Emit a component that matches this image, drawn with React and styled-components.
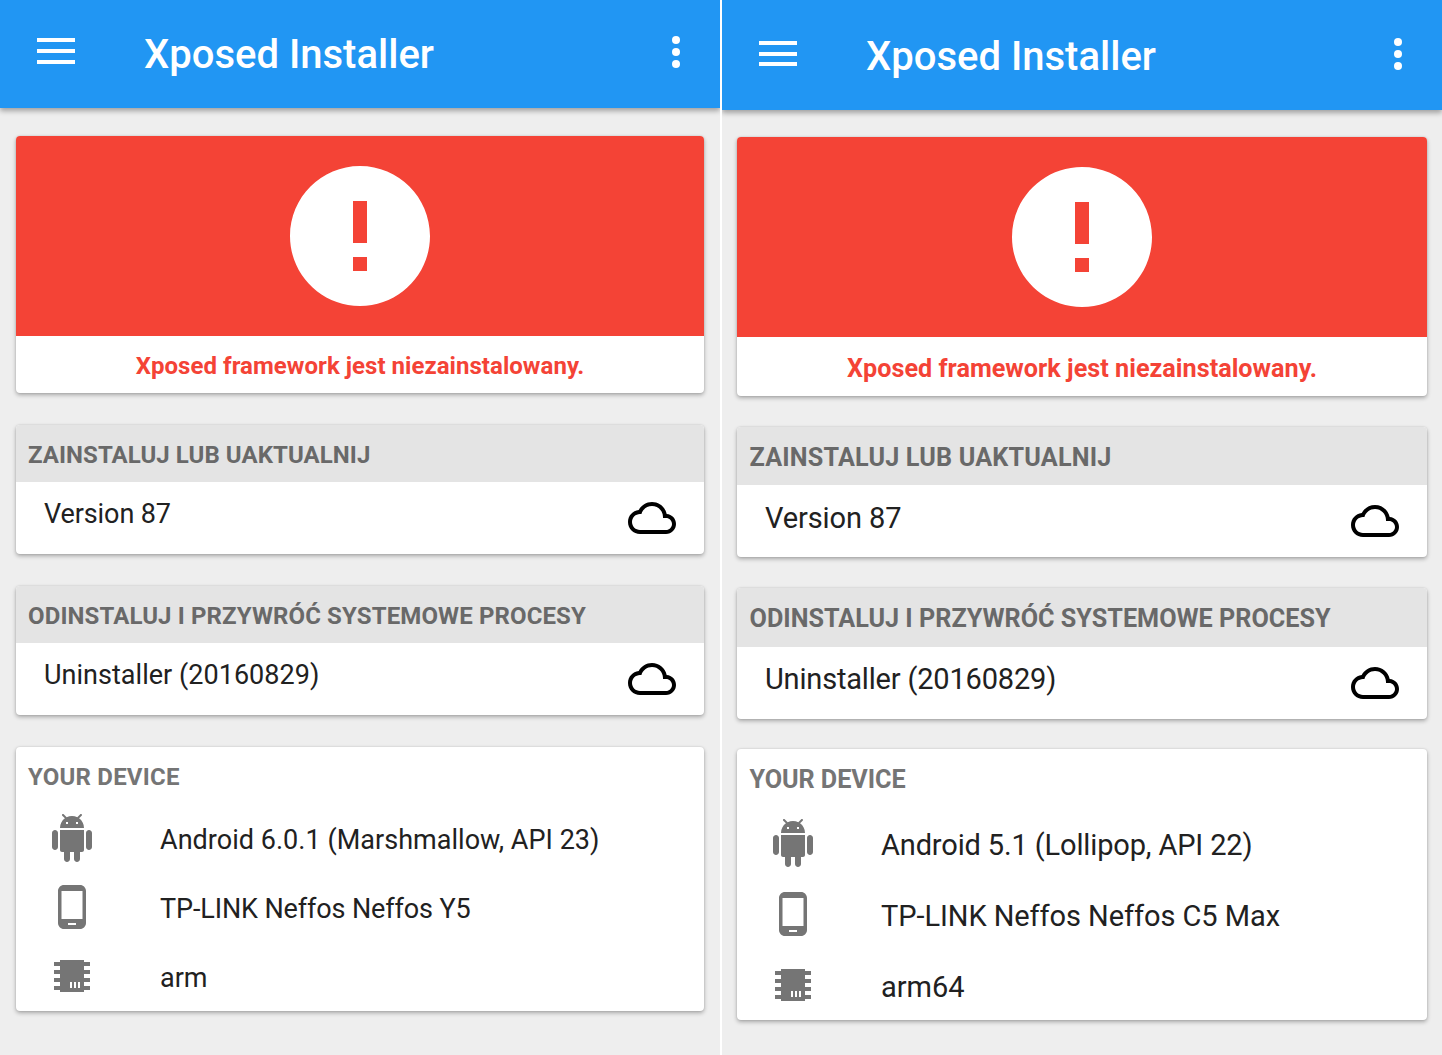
import React from 'react';
import styled, { createGlobalStyle, ThemeProvider } from 'styled-components';

const GlobalStyle = createGlobalStyle`
  * { box-sizing: border-box; }
  body { margin: 0; background: #fff; font-family: Roboto, "Noto Sans", sans-serif; }
`;

const small = {
  bar: 108, menuTop: 38, menuHeight: 26, titleTop: 1, dotsTop: 36,
  top: 28, side: 16, status: 57, statusLine: 60, gap: 32, header: 57, headerLine: 60, headerIndent: 12,
  row: 72, rowShift: -9, statusSize: 24, statusTrack: 0.04, headSize: 24, itemSize: 27,
  deviceTop: 10, deviceStep: 69, deviceHeight: 207,
};
const large = {
  bar: 110, menuTop: 41, menuHeight: 25, titleTop: 3, dotsTop: 38,
  top: 27, side: 15, status: 59, statusLine: 63, gap: 30.5, header: 58.7, headerLine: 62.5, headerIndent: 12.5,
  row: 72.2, rowShift: -7, statusSize: 25.2, statusTrack: 0.02, headSize: 25.2, itemSize: 29,
  deviceTop: 11.2, deviceStep: 70.7, deviceHeight: 212,
};

const Page = styled.div`
  display: flex;
  gap: 2px;
  width: 1442px;
  height: 1055px;
  overflow: hidden;
`;
const Screen = styled.section`
  width: 720px;
  background: #eee;
  overflow: hidden;
`;
const Toolbar = styled.header`
  display: flex;
  align-items: flex-start;
  height: ${p => p.theme.bar}px;
  padding: 0 40px 0 37px;
  background: #2196f3;
  box-shadow: 0 3px 5px rgba(0, 0, 0, 0.32);
`;
const MenuButton = styled.div`
  display: flex;
  flex-direction: column;
  justify-content: space-between;
  width: 38px;
  height: ${p => p.theme.menuHeight}px;
  margin-top: ${p => p.theme.menuTop}px;
`;
const MenuBar = styled.i`
  height: 4px;
  background: #fff;
`;
const Title = styled.h1`
  flex: 1;
  margin: ${p => p.theme.titleTop}px 0 0 69px;
  color: #fff;
  font-size: 40px;
  font-weight: 500;
  line-height: 108px;
`;
const Overflow = styled.div`
  display: flex;
  flex-direction: column;
  gap: 4px;
  margin-top: ${p => p.theme.dotsTop}px;
`;
const Dot = styled.i`
  width: 8px;
  height: 8px;
  border-radius: 50%;
  background: #fff;
`;
const Cards = styled.main`
  display: flex;
  flex-direction: column;
  gap: ${p => p.theme.gap}px;
  padding: ${p => p.theme.top}px ${p => p.theme.side}px 0;
`;
const Card = styled.article`
  background: #fff;
  border-radius: 4px;
  overflow: hidden;
  box-shadow: 0 2px 4px rgba(0, 0, 0, 0.3), 0 0 2px rgba(0, 0, 0, 0.12);
`;
const ErrorBanner = styled.div`
  display: flex;
  align-items: center;
  justify-content: center;
  height: 200px;
  background: #f44336;
`;
const StatusText = styled.p`
  height: ${p => p.theme.status}px;
  margin: 0;
  color: #f44336;
  font-size: ${p => p.theme.statusSize}px;
  font-weight: 700;
  letter-spacing: ${p => p.theme.statusTrack}px;
  line-height: ${p => p.theme.statusLine}px;
  text-align: center;
`;
const CardHeader = styled.h2`
  height: ${p => p.theme.header}px;
  margin: 0;
  padding-left: ${p => p.theme.headerIndent}px;
  background: ${p => (p.$plain ? 'transparent' : '#e4e4e4')};
  color: ${p => (p.$plain ? '#757575' : '#696969')};
  font-size: ${p => p.theme.headSize}px;
  font-weight: 700;
  letter-spacing: ${p => p.$track || 0}px;
  line-height: ${p => p.theme.headerLine}px;
  white-space: nowrap;
`;
const PackageRow = styled.div`
  display: flex;
  align-items: center;
  justify-content: space-between;
  height: ${p => p.theme.row}px;
  padding: 0 28px;
`;
const ItemText = styled.span`
  color: #212121;
  font-size: ${p => p.theme.itemSize}px;
  letter-spacing: ${p => p.$track || 0}px;
  white-space: nowrap;
`;
const PackageName = styled(ItemText)`
  margin-top: ${p => p.theme.rowShift}px;
`;
const DeviceList = styled.div`
  height: ${p => p.theme.deviceHeight}px;
  padding: ${p => p.theme.deviceTop}px 0 0 32px;
`;
const DeviceRow = styled.div`
  display: flex;
  height: ${p => p.theme.deviceStep}px;
`;
const DeviceName = styled(ItemText)`
  margin: 2px 0 0 64px;
  line-height: 48px;
`;

const Icon = ({ size = 48, color = '#757575', d }) => (
  <svg width={size} height={size} viewBox="0 0 24 24" fill={color}>
    <path d={d} fillRule="evenodd" />
  </svg>
);

const paths = {
  error: 'M12 2C6.48 2 2 6.48 2 12s4.48 10 10 10 10-4.48 10-10S17.52 2 12 2zm1 15h-2v-2h2v2zm0-4h-2V7h2v6z',
  cloud: 'M19.35 10.04C18.67 6.59 15.64 4 12 4 9.11 4 6.6 5.64 5.35 8.04 2.34 8.36 0 10.91 0 14c0 3.31 2.69 6 6 6h13c2.76 0 5-2.24 5-5 0-2.64-2.05-4.78-4.65-4.96zM19 18H6c-2.21 0-4-1.79-4-4s1.79-4 4-4h.71C7.37 7.69 9.48 6 12 6c3.04 0 5.5 2.46 5.5 5.5v.5H19c1.66 0 3 1.34 3 3s-1.34 3-3 3z',
  android: 'M6 18c0 .55.45 1 1 1h1v3.5c0 .83.67 1.5 1.5 1.5s1.5-.67 1.5-1.5V19h2v3.5c0 .83.67 1.5 1.5 1.5s1.5-.67 1.5-1.5V19h1c.55 0 1-.45 1-1V8H6v10zM3.5 8C2.67 8 2 8.67 2 9.5v7c0 .83.67 1.5 1.5 1.5S5 17.33 5 16.5v-7C5 8.67 4.33 8 3.5 8zm17 0c-.83 0-1.5.67-1.5 1.5v7c0 .83.67 1.5 1.5 1.5s1.5-.67 1.5-1.5v-7c0-.83-.67-1.5-1.5-1.5zm-4.97-5.84l1.3-1.3c.2-.2.2-.51 0-.71-.2-.2-.51-.2-.71 0l-1.48 1.48C13.85 1.23 12.95 1 12 1c-.96 0-1.86.23-2.66.63L7.85.15c-.2-.2-.51-.2-.71 0-.2.2-.2.51 0 .71l1.31 1.31C6.97 3.26 6 5.01 6 7h12c0-1.99-.97-3.75-2.47-4.84zM10 5H9V4h1v1zm5 0h-1V4h1v1z',
  phone: 'M16 1H8C6.34 1 5 2.34 5 4v16c0 1.66 1.34 3 3 3h8c1.66 0 3-1.34 3-3V4c0-1.66-1.34-3-3-3zm-2 20h-4v-1h4v1zm3.25-3H6.75V4h10.5v14z',
  chip: 'M6 4h12v1h3v2h-3v2h3v2h-3v2h3v2h-3v2h3v2h-3v1H6v-1H3v-2h3v-2H3v-2h3v-2H3V9h3V7H3V5h3zM11 15v3h1v-3zM13 15v3h1v-3zM15 15v3h1v-3z',
};

const PackageCard = ({ heading, name, headTrack, nameTrack }) => (
  <Card>
    <CardHeader $track={headTrack}>{heading}</CardHeader>
    <PackageRow>
      <PackageName $track={nameTrack}>{name}</PackageName>
      <Icon d={paths.cloud} color="#000" />
    </PackageRow>
  </Card>
);

const Installer = ({ theme, device, track }) => (
  <ThemeProvider theme={theme}>
    <Screen>
      <Toolbar>
        <MenuButton><MenuBar /><MenuBar /><MenuBar /></MenuButton>
        <Title>Xposed Installer</Title>
        <Overflow><Dot /><Dot /><Dot /></Overflow>
      </Toolbar>
      <Cards>
        <Card>
          <ErrorBanner><Icon d={paths.error} size={168} color="#fff" /></ErrorBanner>
          <StatusText>Xposed framework jest niezainstalowany.</StatusText>
        </Card>
        <PackageCard
          heading="ZAINSTALUJ LUB UAKTUALNIJ"
          name="Version 87"
          headTrack={track.install}
          nameTrack={track.version}
        />
        <PackageCard
          heading="ODINSTALUJ I PRZYWRÓĆ SYSTEMOWE PROCESY"
          name="Uninstaller (20160829)"
          headTrack={track.remove}
          nameTrack={track.uninstaller}
        />
        <Card>
          <CardHeader $plain $track={track.device}>YOUR DEVICE</CardHeader>
          <DeviceList>
            {['android', 'phone', 'chip'].map((kind, i) => (
              <DeviceRow key={kind}>
                <Icon d={paths[kind]} />
                <DeviceName $track={track.rows[i]}>{device[i]}</DeviceName>
              </DeviceRow>
            ))}
          </DeviceList>
        </Card>
      </Cards>
    </Screen>
  </ThemeProvider>
);

const smallTrack = { install: 0.07, version: -0.1, remove: 0.12, uninstaller: 0.03, device: 0.22, rows: [0.03, -0.12, 0] };
const largeTrack = { install: 0.18, version: -0.1, remove: 0.01, uninstaller: -0.18, device: -0.05, rows: [-0.14, -0.07, 0] };

export default function App() {
  return (
    <>
      <GlobalStyle />
      <Page>
        <Installer
          theme={small}
          track={smallTrack}
          device={['Android 6.0.1 (Marshmallow, API 23)', 'TP-LINK Neffos Neffos Y5', 'arm']}
        />
        <Installer
          theme={large}
          track={largeTrack}
          device={['Android 5.1 (Lollipop, API 22)', 'TP-LINK Neffos Neffos C5 Max', 'arm64']}
        />
      </Page>
    </>
  );
}
